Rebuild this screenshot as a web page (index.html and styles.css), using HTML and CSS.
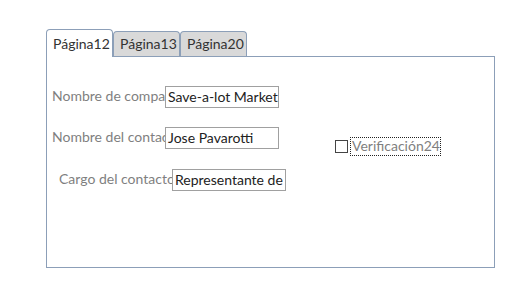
FILE: index.html
```html
<!DOCTYPE html>
<html lang="es">
<head>
  <meta charset="UTF-8">
  <title>Formulario</title>
  <link rel="stylesheet" href="styles.css">
</head>
<body>

  <div class="tabs">
    <div class="tab active">Página12</div>
    <div class="tab">Página13</div>
    <div class="tab">Página20</div>
  </div>

  <div class="panel">
    <div class="row">
      <label class="lbl">Nombre de compañía</label>
      <div class="box">Save-a-lot Market</div>
    </div>
    <div class="row row2">
      <label class="lbl">Nombre del contacto</label>
      <div class="box">Jose Pavarotti</div>
      <div class="check">
        <span class="chk"></span>
        <span class="chk-lbl">Verificación24</span>
      </div>
    </div>
    <div class="row row3">
      <label class="lbl">Cargo del contacto</label>
      <div class="box">Representante de ventas</div>
    </div>
  </div>

</body>
</html>
```

FILE: styles.css
```css
body {
  margin: 0;
  padding: 29px 0 0 46px;
  font-family: Lato, sans-serif;
  font-size: 14px;
  background: #fff;
}
.tabs {
  display: flex;
  align-items: flex-end;
  height: 27px;
}
.tab {
  box-sizing: border-box;
  width: 67px;
  height: 25px;
  border: 1px solid #8c9fb8;
  border-bottom: none;
  border-radius: 4px 4px 0 0;
  background: #d9d9d9;
  color: #333;
  padding: 3px 0 0 6px;
}
.tab.active {
  height: 28px;
  margin-bottom: -1px;
  background: #fff;
  padding-top: 5px;
  position: relative;
}
.panel {
  box-sizing: border-box;
  width: 449px;
  height: 212px;
  border: 1px solid #8c9fb8;
  padding: 29px 0 0 5px;
}
.row {
  display: flex;
  align-items: flex-start;
  height: 22px;
  margin-bottom: 19px;
}
.row2 {
  margin-bottom: 20px;
}
.row3 {
  margin-left: 7px;
}
.lbl {
  width: 113px;
  overflow: hidden;
  white-space: nowrap;
  color: #7f7f7f;
  padding-top: 1px;
}
.box {
  box-sizing: border-box;
  width: 114px;
  height: 22px;
  border: 1px solid #a0a0a0;
  padding: 1px 0 0 2px;
  overflow: hidden;
  white-space: nowrap;
  color: #222;
}
.check {
  display: flex;
  align-items: center;
  margin: 10px 0 0 56px;
}
.chk {
  width: 11px;
  height: 11px;
  border: 1px solid #444;
  margin-right: 2px;
}
.chk-lbl {
  box-sizing: border-box;
  border: 1px dotted #222;
  height: 19px;
  line-height: 16px;
  padding-left: 1px;
  width: 91px;
  color: #7f7f7f;
}
```
